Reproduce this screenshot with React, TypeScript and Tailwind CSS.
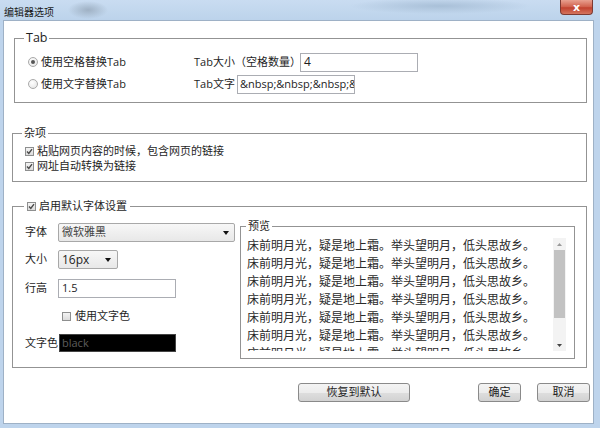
import React from 'react'

const font = "font-['Open_Sans','Noto_Sans_CJK_SC',sans-serif]"

const poem = '床前明月光，疑是地上霜。举头望明月，低头思故乡。'

function Radio({ checked }: { checked?: boolean }) {
  return (
    <span className="w-[10px] h-[10px] rounded-full border border-[#a9a9a9] bg-[radial-gradient(circle_at_40%_35%,#ffffff,#e2e2e2)] flex items-center justify-center shrink-0">
      {checked && <span className="w-[4px] h-[4px] rounded-full bg-[#555]" />}
    </span>
  )
}

function Check({ checked }: { checked?: boolean }) {
  return (
    <span className="w-[9px] h-[9px] border border-[#8e8f8f] bg-[linear-gradient(#f4f4f4,#dcdcdc)] flex items-center justify-center shrink-0">
      {checked && (
        <svg width="7" height="7" viewBox="0 0 7 7">
          <path d="M1 3.6 L2.8 5.4 L6 1.2" stroke="#4a4a4a" strokeWidth="1.4" fill="none" />
        </svg>
      )}
    </span>
  )
}

function Arrow() {
  return (
    <svg width="6" height="4" viewBox="0 0 6 4">
      <path d="M0 0 L6 0 L3 4 Z" fill="#111" />
    </svg>
  )
}

function Button({ label, w }: { label: string; w: string }) {
  return (
    <div className={`${w} h-[19px] border border-[#8a8a8a] rounded-[3px] bg-[linear-gradient(#f4f4f4,#ececec_50%,#dedede_50%,#d2d2d2)] flex items-center justify-center text-[11px] text-[#222]`}>
      {label}
    </div>
  )
}

export default function App() {
  return (
    <div className={`w-[600px] h-[428px] bg-[#bed4ec] flex flex-col ${font}`}>
      {/* title bar */}
      <div className="h-[20px] flex bg-[radial-gradient(ellipse_20px_9px_at_88px_10px,#9fb1c4,transparent),radial-gradient(ellipse_90px_8px_at_440px_6px,#a9c0d8,transparent),linear-gradient(#c9dcf1,#bcd3eb)]">
        <div className="pl-[4px] pt-[5px] text-[10px] leading-[14px] text-[#1b1b1b]">编辑器选项</div>
        <div className="ml-auto mr-[7px] w-[33px] h-[15px] rounded-b-[4px] border border-t-0 border-[#7d3a32] bg-[linear-gradient(#e8a08f,#d0604c_50%,#c1412e_55%,#d4755f)] flex items-center justify-center">
          <span className="text-white text-[11px] leading-[11px] font-bold font-['DejaVu_Sans',sans-serif]">x</span>
        </div>
      </div>

      {/* client area */}
      <div className="flex-1 ml-[3px] mr-[6px] mb-[4px] bg-white border border-[#9eb1c6] flex flex-col text-[11px] text-[#1e1e1e]">
        {/* Tab */}
        <fieldset className="mt-[9px] ml-[10px] mr-[6px] border border-[#939393]">
          <legend className="ml-[9px] px-[2px] text-[12.5px] leading-[16px]">Tab</legend>
          <div className="pl-[13px] pt-[6px] pb-[8px] flex flex-col gap-[2px]">
            <div className="h-[20px] flex items-center">
              <div className="w-[166px] flex items-center gap-[3px]">
                <Radio checked />
                <span>使用空格替换Tab</span>
              </div>
              <span className="w-[106px]">Tab大小（空格数量）</span>
              <div className="w-[118px] h-[19px] border border-[#abadb3] px-[3px] flex items-center text-[12px]">4</div>
            </div>
            <div className="h-[20px] flex items-center">
              <div className="w-[166px] flex items-center gap-[3px]">
                <Radio />
                <span>使用文字替换Tab</span>
              </div>
              <span className="w-[43px]">Tab文字</span>
              <div className="w-[118px] h-[19px] border border-[#abadb3] px-[2px] flex items-center overflow-hidden whitespace-nowrap">
                {'&nbsp;&nbsp;&nbsp;&nbsp;'}
              </div>
            </div>
          </div>
        </fieldset>

        {/* 杂项 */}
        <fieldset className="mt-[22px] ml-[8px] mr-[6px] border border-[#939393]">
          <legend className="ml-[9px] px-[2px] leading-[16px]">杂项</legend>
          <div className="pl-[12px] pt-[3px] pb-[7px] flex flex-col">
            <div className="h-[15px] flex items-center gap-[3px]">
              <Check checked />
              <span>粘贴网页内容的时候，包含网页的链接</span>
            </div>
            <div className="h-[15px] flex items-center gap-[3px]">
              <Check checked />
              <span>网址自动转换为链接</span>
            </div>
          </div>
        </fieldset>

        {/* 字体 */}
        <fieldset className="mt-[16px] ml-[8px] mr-[6px] border border-[#939393]">
          <legend className="ml-[11px] px-[3px] leading-[16px] flex items-center gap-[3px]">
            <Check checked />
            <span>启用默认字体设置</span>
          </legend>
          <div className="flex pl-[12px] pb-[8px]">
            <div className="w-[215px] pt-[9px] flex flex-col">
              <div className="h-[19px] flex items-center">
                <span className="w-[33px]">字体</span>
                <div className="w-[177px] h-[19px] border border-[#a8a8a8] rounded-[2px] bg-[linear-gradient(#f7f7f7,#e8e8e8)] flex items-center pl-[3px] pr-[5px] text-[#444]">
                  <span>微软雅黑</span>
                  <span className="ml-auto"><Arrow /></span>
                </div>
              </div>
              <div className="mt-[8px] h-[19px] flex items-center">
                <span className="w-[33px]">大小</span>
                <div className="w-[60px] h-[19px] border border-[#a8a8a8] rounded-[2px] bg-[linear-gradient(#f7f7f7,#e8e8e8)] flex items-center pl-[3px] pr-[6px] text-[12px]">
                  <span>16px</span>
                  <span className="ml-auto"><Arrow /></span>
                </div>
              </div>
              <div className="mt-[10px] h-[19px] flex items-center">
                <span className="w-[33px]">行高</span>
                <div className="w-[118px] h-[19px] border border-[#abadb3] px-[3px] flex items-center">1.5</div>
              </div>
              <div className="mt-[11px] h-[14px] flex items-center gap-[4px] pl-[37px]">
                <Check />
                <span>使用文字色</span>
              </div>
              <div className="mt-[11px] h-[18px] flex items-center">
                <span className="w-[34px]">文字色</span>
                <div className="w-[117px] h-[18px] bg-black border border-[#444] px-[2px] flex items-center text-[#5c5c5c]">black</div>
              </div>
            </div>

            <fieldset className="mt-[5px] w-[335px] h-[140px] border border-[#939393]">
              <legend className="ml-[5px] px-[2px] leading-[14px]">预览</legend>
              <div className="flex pl-[6px] pr-[8px] pt-[3px]">
                <div className="flex-1 h-[115px] overflow-hidden text-[12px] leading-[18px] text-[#2a2a2a] font-['Noto_Sans_CJK_SC',sans-serif] whitespace-nowrap">
                  {Array.from({ length: 7 }).map((_, i) => (
                    <div key={i}>{poem}</div>
                  ))}
                </div>
                <div className="mt-[2px] w-[13px] h-[113px] bg-[#f3f3f3] flex flex-col items-center">
                  <div className="h-[12px] flex items-center justify-center">
                    <svg width="5" height="3" viewBox="0 0 5 3"><path d="M0 3 L5 3 L2.5 0 Z" fill="#9a9a9a" /></svg>
                  </div>
                  <div className="w-[11px] h-[68px] bg-[#c2c2c2]" />
                  <div className="mt-auto h-[12px] flex items-center justify-center">
                    <svg width="5" height="3" viewBox="0 0 5 3"><path d="M0 0 L5 0 L2.5 3 Z" fill="#444" /></svg>
                  </div>
                </div>
              </div>
            </fieldset>
          </div>
        </fieldset>

        {/* buttons */}
        <div className="mt-[15px] pr-[3px] flex justify-end">
          <Button label="恢复到默认" w="w-[112px]" />
          <div className="ml-[68px]"><Button label="确定" w="w-[43px]" /></div>
          <div className="ml-[16px]"><Button label="取消" w="w-[53px]" /></div>
        </div>
      </div>
    </div>
  )
}
